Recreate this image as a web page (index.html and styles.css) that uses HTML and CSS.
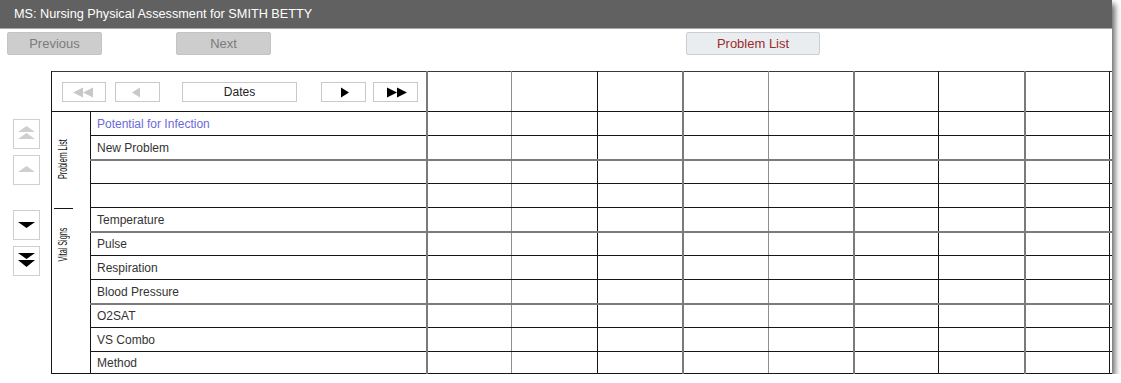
FILE: index.html
```html
<!DOCTYPE html>
<html lang="en">
<head>
    <meta charset="UTF-8">
    <title>Nursing Physical Assessment</title>
    <link rel="stylesheet" href="styles.css">
</head>
<body>
    <div class="window">
        <div class="title-bar">MS: Nursing Physical Assessment for SMITH BETTY</div>

        <div class="toolbar">
            <button class="btn btn-disabled btn-prev">Previous</button>
            <button class="btn btn-disabled btn-next">Next</button>
            <button class="btn btn-problem">Problem List</button>
        </div>

        <div class="content">
            <div class="scroller">
                <button class="scroll-btn">
                    <svg width="27" height="30" viewBox="0 0 27 30"><polygon points="5,13 13.5,7 22,13" fill="#cfcfcf"/><polygon points="5,20 13.5,14 22,20" fill="#cfcfcf"/></svg>
                </button>
                <button class="scroll-btn">
                    <svg width="27" height="30" viewBox="0 0 27 30"><polygon points="5,17 13.5,11 22,17" fill="#cfcfcf"/></svg>
                </button>
                <button class="scroll-btn scroll-gap">
                    <svg width="27" height="30" viewBox="0 0 27 30"><polygon points="5,12 22,12 13.5,18" fill="#000"/></svg>
                </button>
                <button class="scroll-btn">
                    <svg width="27" height="30" viewBox="0 0 27 30"><polygon points="5,7 22,7 13.5,13" fill="#000"/><polygon points="5,14 22,14 13.5,21" fill="#000"/></svg>
                </button>
            </div>

            <table class="grid">
                <colgroup>
                    <col class="c-k" style="width:39px">
                    <col class="c-k" style="width:336px">
                    <col class="c-g" style="width:85px">
                    <col class="c-m" style="width:86px">
                    <col class="c-k" style="width:85px">
                    <col class="c-g" style="width:86px">
                    <col class="c-m" style="width:85px">
                    <col class="c-g" style="width:85px">
                    <col class="c-k" style="width:86px">
                    <col class="c-g" style="width:85px">
                    <col class="c-k" style="width:85px">
                </colgroup>
                <tr class="head-row">
                    <th colspan="2">
                        <div class="date-nav">
                            <button class="nav-btn nav-first">
                                <svg width="44" height="20" viewBox="0 0 44 20"><polygon points="11,10.5 21,5.5 21,15.5" fill="#c8c8c8"/><polygon points="21,10.5 31,5.5 31,15.5" fill="#c8c8c8"/></svg>
                            </button>
                            <button class="nav-btn nav-prev">
                                <svg width="45" height="20" viewBox="0 0 45 20"><polygon points="17,10.5 25,5.5 25,15.5" fill="#c8c8c8"/></svg>
                            </button>
                            <div class="nav-dates">Dates</div>
                            <button class="nav-btn nav-next">
                                <svg width="45" height="20" viewBox="0 0 45 20"><polygon points="20,5.5 28,10.5 20,15.5" fill="#000"/></svg>
                            </button>
                            <button class="nav-btn nav-last">
                                <svg width="45" height="20" viewBox="0 0 45 20"><polygon points="14,5.5 24,10.5 14,15.5" fill="#000"/><polygon points="24,5.5 34,10.5 24,15.5" fill="#000"/></svg>
                            </button>
                        </div>
                    </th>
                    <td></td><td></td><td></td><td></td><td></td><td></td><td></td><td></td><td></td>
                </tr>
                <tr class="r-k">
                    <td rowspan="4" class="tab tab-problem"><span>Problem List</span></td>
                    <td class="label label-link">Potential for Infection</td>
                    <td></td><td></td><td></td><td></td><td></td><td></td><td></td><td></td><td></td>
                </tr>
                <tr class="r-k">
                    <td class="label">New Problem</td>
                    <td></td><td></td><td></td><td></td><td></td><td></td><td></td><td></td><td></td>
                </tr>
                <tr class="r-g">
                    <td class="label"></td>
                    <td></td><td></td><td></td><td></td><td></td><td></td><td></td><td></td><td></td>
                </tr>
                <tr class="r-k">
                    <td class="label"></td>
                    <td></td><td></td><td></td><td></td><td></td><td></td><td></td><td></td><td></td>
                </tr>
                <tr class="r-k">
                    <td rowspan="7" class="tab tab-vitals"><span>Vital Signs</span></td>
                    <td class="label">Temperature</td>
                    <td></td><td></td><td></td><td></td><td></td><td></td><td></td><td></td><td></td>
                </tr>
                <tr class="r-g">
                    <td class="label">Pulse</td>
                    <td></td><td></td><td></td><td></td><td></td><td></td><td></td><td></td><td></td>
                </tr>
                <tr class="r-k">
                    <td class="label">Respiration</td>
                    <td></td><td></td><td></td><td></td><td></td><td></td><td></td><td></td><td></td>
                </tr>
                <tr class="r-k">
                    <td class="label">Blood Pressure</td>
                    <td></td><td></td><td></td><td></td><td></td><td></td><td></td><td></td><td></td>
                </tr>
                <tr class="r-g">
                    <td class="label">O2SAT</td>
                    <td></td><td></td><td></td><td></td><td></td><td></td><td></td><td></td><td></td>
                </tr>
                <tr class="r-k">
                    <td class="label">VS Combo</td>
                    <td></td><td></td><td></td><td></td><td></td><td></td><td></td><td></td><td></td>
                </tr>
                <tr class="r-k row-last">
                    <td class="label">Method</td>
                    <td></td><td></td><td></td><td></td><td></td><td></td><td></td><td></td><td></td>
                </tr>
            </table>
        </div>
    </div>
</body>
</html>
```

FILE: styles.css
```css
body {
    margin: 0;
    background-color: #fff;
    font-family: "Liberation Sans", Arial, sans-serif;
}
.window {
    width: 1112px;
    height: 374px;
    overflow: hidden;
    background-color: #fff;
    box-shadow: 3px 4px 6px rgba(0, 0, 0, 0.6);
}
.title-bar {
    height: 28px;
    line-height: 28px;
    padding-left: 14px;
    background-color: #616161;
    color: #fff;
    font-size: 12.7px;
    border-bottom: 1px solid #a8a8a8;
}
.toolbar {
    display: flex;
    align-items: flex-start;
    padding-top: 3px;
    height: 39px;
}
.btn {
    height: 23px;
    font-family: inherit;
    font-size: 13px;
    border-radius: 2px;
    padding: 0;
    cursor: pointer;
}
.btn-disabled {
    width: 95px;
    background-color: #cdcdcd;
    border: 1px solid #c4c4c4;
    color: #7b7b7b;
}
.btn-prev {
    margin-left: 7px;
}
.btn-next {
    margin-left: 74px;
}
.btn-problem {
    width: 134px;
    margin-left: 415px;
    background-color: #e9edf0;
    border: 1px solid #cbcfd3;
    color: #9c2b2b;
}
.content {
    display: flex;
    align-items: flex-start;
}
.scroller {
    display: flex;
    flex-direction: column;
    gap: 6px;
    width: 27px;
    padding: 48px 11px 0 13px;
}
.scroll-btn {
    width: 27px;
    height: 30px;
    padding: 0;
    border: 1px solid #cfcfcf;
    background-color: #fff;
}
.scroll-btn svg {
    display: block;
    margin: -1px;
}
.scroll-gap {
    margin-top: 19px;
}
.grid {
    border-collapse: collapse;
    table-layout: fixed;
    width: 1119px;
    border-top: 1px solid #3a3a3a;
}
.grid td,
.grid th {
    border: 0;
    padding: 0;
    height: 23px;
}
.c-k {
    border-left: 1px solid #161616;
}
.c-g {
    border-left: 2px solid #7b7b7b;
}
.c-m {
    border-left: 1px solid #8e8e8e;
}
.r-k > td {
    border-top: 1px solid #161616;
}
.r-g > td {
    border-top: 2px solid #7b7b7b;
}
.grid .r-g > td {
    height: 22px;
}
.grid .row-last > td {
    height: 21px;
    border-bottom: 1px solid #161616;
}
.grid .head-row th,
.grid .head-row td {
    height: 39px;
}
.date-nav {
    display: flex;
    align-items: center;
    padding-left: 10px;
}
.nav-btn {
    height: 20px;
    padding: 0;
    border: 1px solid #c9c9c9;
    background-color: #fff;
}
.nav-btn svg {
    display: block;
    margin: -1px;
}
.nav-first {
    width: 44px;
}
.nav-prev {
    width: 45px;
    margin-left: 9px;
}
.nav-dates {
    width: 115px;
    height: 20px;
    margin-left: 22px;
    box-sizing: border-box;
    border: 1px solid #c9c9c9;
    font-size: 12px;
    font-weight: normal;
    line-height: 18px;
    text-align: center;
    color: #222;
}
.nav-next {
    width: 45px;
    margin-left: 24px;
}
.nav-last {
    width: 45px;
    margin-left: 7px;
}
.label {
    padding-left: 6px !important;
    font-size: 12px;
    color: #333;
    white-space: nowrap;
}
.label-link {
    color: #6b6bd6;
}
.grid .tab {
    vertical-align: top;
    text-align: left;
    padding-left: 3px;
    position: relative;
}
.tab span {
    display: inline-block;
    writing-mode: vertical-rl;
    transform: rotate(180deg) scale(1, 0.55);
    font-size: 13px;
    line-height: 15px;
    color: #111;
}
.grid .tab-problem {
    padding-top: 11px;
}
.grid .tab-vitals {
    border-top: 0;
    border-bottom: 1px solid #161616;
    padding-top: 6px;
}
.tab-vitals::before {
    content: "";
    position: absolute;
    top: 0;
    left: 2px;
    width: 19px;
    border-top: 1px solid #161616;
}
```
